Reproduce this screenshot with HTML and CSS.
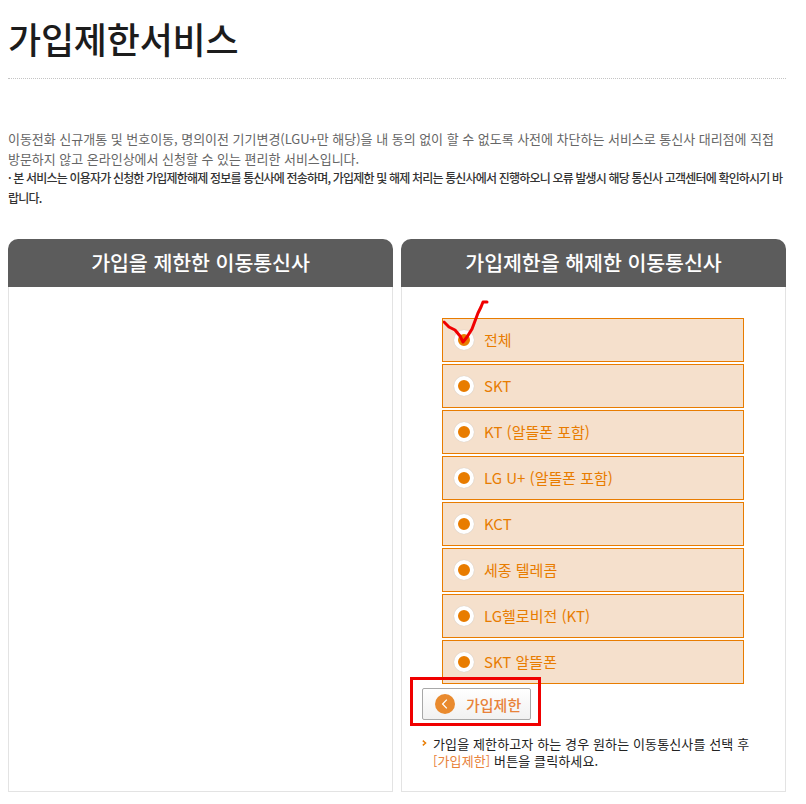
FILE: index.html
```html
<!DOCTYPE html>
<html lang="ko">
<head>
<meta charset="utf-8">
<title>가입제한서비스</title>
<link rel="stylesheet" href="styles.css">
</head>
<body>
<main class="page">
  <h1 class="title">가입제한서비스</h1>
  <div class="intro">
    <p class="intro-main">이동전화 신규개통 및 번호이동, 명의이전 기기변경(LGU+만 해당)을 내 동의 없이 할 수 없도록 사전에 차단하는 서비스로 통신사 대리점에 직접 방문하지 않고 온라인상에서 신청할 수 있는 편리한 서비스입니다.</p>
    <p class="intro-note">· 본 서비스는 이용자가 신청한 가입제한해제 정보를 통신사에 전송하며, 가입제한 및 해제 처리는 통신사에서 진행하오니 오류 발생시 해당 통신사 고객센터에 확인하시기 바랍니다.</p>
  </div>
  <div class="panels">
    <section class="panel">
      <h2 class="panel-head">가입을 제한한 이동통신사</h2>
      <div class="panel-body"></div>
    </section>
    <section class="panel">
      <h2 class="panel-head">가입제한을 해제한 이동통신사</h2>
      <div class="panel-body panel-body-right">
        <ul class="carriers">
          <li class="carrier"><span class="radio"></span>전체</li>
          <li class="carrier"><span class="radio"></span>SKT</li>
          <li class="carrier"><span class="radio"></span>KT (알뜰폰 포함)</li>
          <li class="carrier"><span class="radio"></span>LG U+ (알뜰폰 포함)</li>
          <li class="carrier"><span class="radio"></span>KCT</li>
          <li class="carrier"><span class="radio"></span>세종 텔레콤</li>
          <li class="carrier"><span class="radio"></span>LG헬로비전 (KT)</li>
          <li class="carrier"><span class="radio"></span>SKT 알뜰폰</li>
        </ul>
        <button class="limit-btn" type="button">
          <svg class="limit-icon" viewBox="0 0 20 20" width="20" height="20" aria-hidden="true">
            <circle cx="10" cy="10" r="10" fill="#e98a2e"/>
            <path d="M11.8 5.6 7.6 10l4.2 4.4" fill="none" stroke="#fff" stroke-width="1.3"/>
          </svg>
          가입제한
        </button>
        <div class="note">
          <svg class="note-mark" viewBox="0 0 5 6" width="5" height="6" aria-hidden="true"><path d="M.8.6 3.6 3 .8 5.4" fill="none" stroke="#e87c00" stroke-width="1.4"/></svg>
          <p>가입을 제한하고자 하는 경우 원하는 이동통신사를 선택 후<br><span class="note-key">[가입제한]</span> 버튼을 클릭하세요.</p>
        </div>
        <div class="red-box"></div>
        <svg class="red-check" viewBox="0 0 50 50" width="50" height="50" aria-hidden="true">
          <path d="M1 25 L6 30 L12 33 L17 39 L20 45 L24 40 L29 32 L32 24 L35 16 L38 10 L40 5 L44 5" fill="none" stroke="#f00000" stroke-width="3" stroke-linecap="round" stroke-linejoin="round"/>
        </svg>
      </div>
    </section>
  </div>
</main>
</body>
</html>
```
FILE: styles.css
```css
* { box-sizing: border-box; }
html, body { margin: 0; padding: 0; background: #fff; }
body {
  font-family: "Noto Sans CJK KR", "Noto Sans", sans-serif;
  color: #333;
}
.page { width: 806px; height: 804px; padding: 0 20px 0 8px; overflow: hidden; }
.title {
  margin: 0;
  height: 79px;
  padding-top: 12px;
  font-size: 36px;
  line-height: 52px;
  font-weight: 500;
  letter-spacing: -0.2px;
  color: #1c1c1c;
  border-bottom: 1px dotted #c4c4c4;
}
.intro { padding-top: 50px; font-size: 13px; line-height: 19.5px; letter-spacing: -0.025px; }
.intro p { margin: 0; }
.intro-main { color: #666; }
.intro-note { color: #333; font-size: 12px; letter-spacing: -0.82px; font-weight: 500; }
.panels { display: flex; gap: 8px; margin-top: 32px; }
.panel { width: 385px; }
.panel-head {
  margin: 0;
  height: 48px;
  background: #5c5c5c;
  border-radius: 10px 10px 0 0;
  color: #fff;
  font-size: 20.6px;
  line-height: 47px;
  font-weight: 500;
  letter-spacing: -0.1px;
  text-align: center;
}
.panel-body {
  height: 505px;
  border: 1px solid #e3e3e3;
  border-top: 0;
}
.panel-body-right { position: relative; padding: 31px 0 0 20px; }
.carriers {
  list-style: none;
  margin: 0 0 0 20px;
  padding: 0;
  width: 302px;
  display: flex;
  flex-direction: column;
  gap: 2px;
}
.carrier {
  height: 44px;
  display: flex;
  align-items: center;
  gap: 10px;
  padding: 0 0 1px 11px;
  background: #f5e0cc;
  border: 1px solid #e87c00;
  color: #e87c00;
  font-size: 15px;
  font-weight: 400;
}
.radio {
  width: 20px;
  height: 20px;
  border-radius: 50%;
  background: #e87c00;
  border: 4px solid #fff;
  box-shadow: 0 0 1px #bbb;
  flex: none;
}
.limit-btn {
  display: flex;
  align-items: center;
  gap: 11px;
  width: 109px;
  height: 32px;
  margin-top: 4px;
  padding: 0 0 0 12px;
  background: linear-gradient(#fff, #f1f1f1);
  border: 1px solid #a8a8a8;
  border-radius: 2px;
  color: #e8823a;
  font-family: inherit;
  font-size: 15px;
  font-weight: 500;
}
.limit-icon { flex: none; }
.note {
  position: relative;
  margin-top: 15px;
  padding-left: 11px;
  font-size: 13px;
  line-height: 17px;
  letter-spacing: 0.12px;
  color: #222;
}
.note p { margin: 0; }
.note-mark { position: absolute; left: 0; top: 5px; }
.note-key { color: #e8823a; }
.red-box {
  position: absolute;
  left: 8px;
  top: 390px;
  width: 131px;
  height: 49px;
  border: 3px solid #f00000;
}
.red-check {
  position: absolute;
  left: 41px;
  top: 10px;
}
```
